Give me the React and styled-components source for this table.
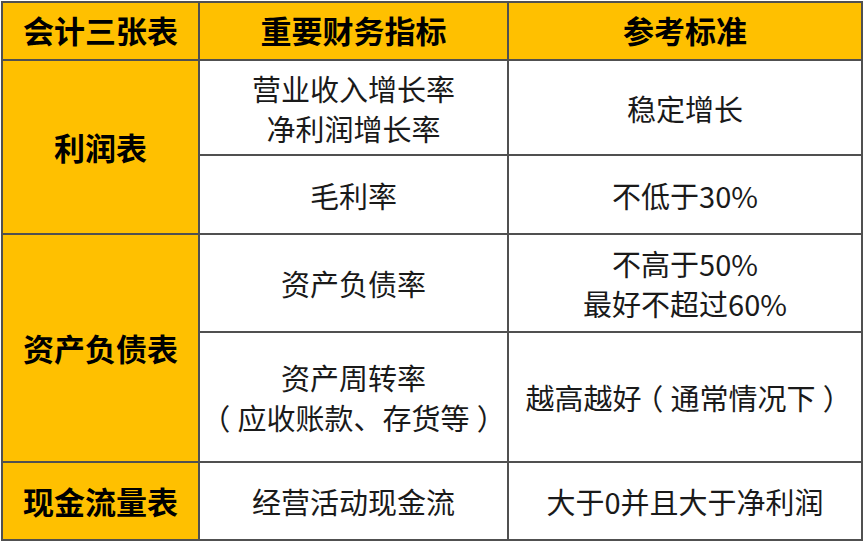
import React from 'react';
import styled, { createGlobalStyle } from 'styled-components';

const GlobalStyle = createGlobalStyle`
  body {
    margin: 0;
    background: #ffffff;
    font-family: "Noto Sans CJK SC", "Noto Sans", sans-serif;
  }
`;

const COLORS = {
  YELLOW: '#FFC000',
  LINE: '#505050',
  TEXT: '#1a1a1a',
};

const Page = styled.div`
  padding: 1px 0 0 1px;
  width: 864px;
  height: 543px;
  box-sizing: border-box;
`;

const Table = styled.table`
  border-collapse: collapse;
  table-layout: fixed;
  width: 860px;
`;

const Row = styled.tr`
  height: ${(props) => props.height}px;
`;

const Cell = styled.td`
  border: 2px solid ${COLORS.LINE};
  color: ${COLORS.TEXT};
  font-size: 29px;
  line-height: 40px;
  padding: 0;
  text-align: center;
  text-spacing-trim: space-all;
  vertical-align: middle;
  white-space: nowrap;
`;

const HeaderCell = styled(Cell).attrs({ as: 'th' })`
  background-color: ${COLORS.YELLOW};
  color: #000000;
  font-size: 31px;
  font-weight: 700;
  padding-bottom: 2px;
`;

const SheetCell = styled(Cell)`
  background-color: ${COLORS.YELLOW};
  color: #000000;
  font-size: 31px;
  font-weight: 700;
`;

// full-width brackets drawn centred in their box, as in the source sheet
const Paren = styled.span`
  font-feature-settings: "halt";
  padding: 0 0.25em;
`;

const ROWS = [
  {
    height: 95,
    sheet: '利润表',
    span: 2,
    metric: ['营业收入增长率', '净利润增长率'],
    standard: ['稳定增长'],
  },
  { height: 79, metric: ['毛利率'], standard: ['不低于30%'] },
  {
    height: 98,
    sheet: '资产负债表',
    span: 2,
    metric: ['资产负债率'],
    standard: ['不高于50%', '最好不超过60%'],
  },
  {
    height: 130,
    metric: ['资产周转率', '（应收账款、存货等）'],
    standard: ['越高越好（通常情况下）'],
  },
  {
    height: 78,
    sheet: '现金流量表',
    span: 1,
    metric: ['经营活动现金流'],
    standard: ['大于0并且大于净利润'],
  },
];

const withParens = (text) => text.split(/([（）])/).map((part, i) => (
  part === '（' || part === '）' ? <Paren key={i}>{ part }</Paren> : part
));

const lines = (items) => items.map((text, i) => (
  <React.Fragment key={text}>
    {i > 0 && <br />}
    {withParens(text)}
  </React.Fragment>
));

const App = () => (
  <Page>
    <GlobalStyle />
    <Table>
      <colgroup>
        <col style={{ width: 197 }} />
        <col style={{ width: 309 }} />
        <col style={{ width: 354 }} />
      </colgroup>
      <thead>
        <Row height={58}>
          <HeaderCell>会计三张表</HeaderCell>
          <HeaderCell>重要财务指标</HeaderCell>
          <HeaderCell>参考标准</HeaderCell>
        </Row>
      </thead>
      <tbody>
        {
          ROWS.map((row) => (
            <Row key={row.metric[0]} height={row.height}>
              { row.sheet && <SheetCell rowSpan={row.span}>{ row.sheet }</SheetCell> }
              <Cell>{ lines(row.metric) }</Cell>
              <Cell>{ lines(row.standard) }</Cell>
            </Row>
          ))
        }
      </tbody>
    </Table>
  </Page>
);

export default App;
